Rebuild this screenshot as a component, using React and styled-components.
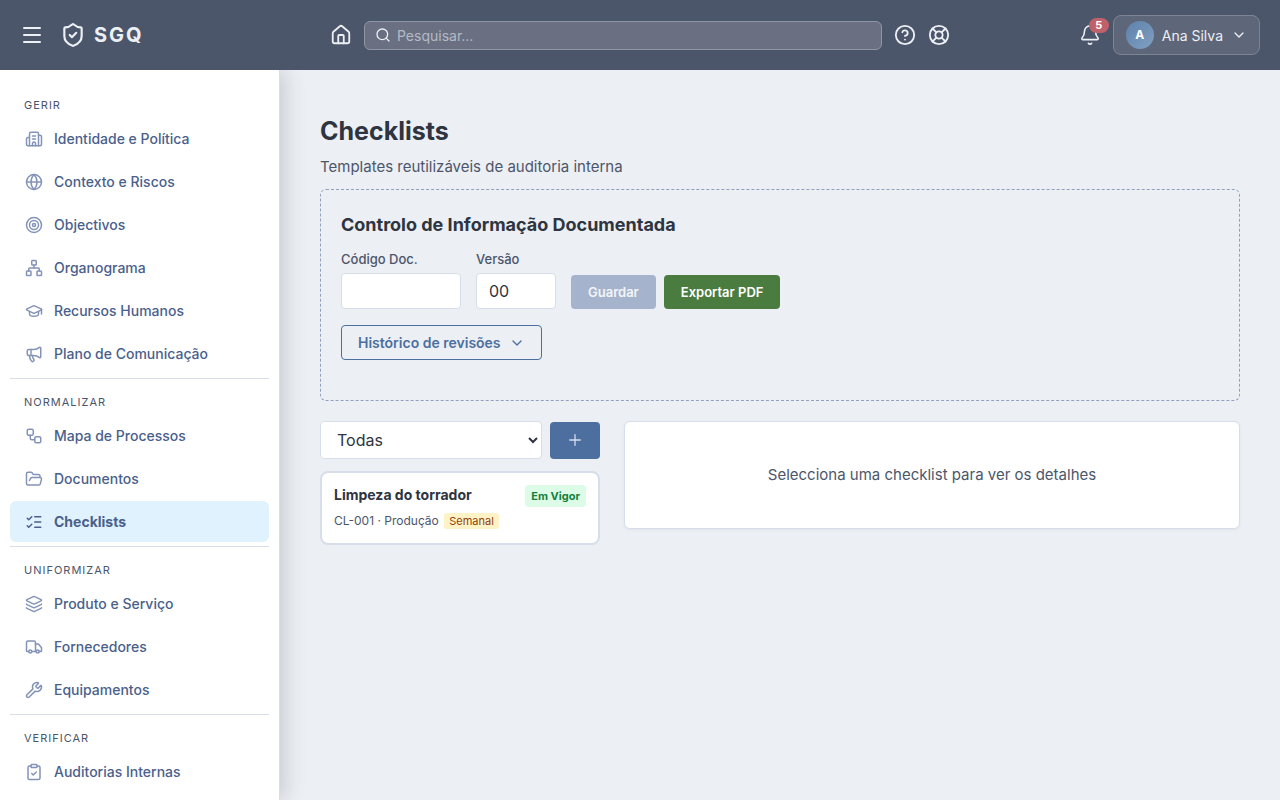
import { useState } from 'react';
import styled, { createGlobalStyle } from 'styled-components';
import {
  Bell,
  Building2,
  ChevronDown,
  CircleQuestionMark,
  ClipboardCheck,
  FolderOpen,
  Globe,
  GraduationCap,
  House,
  Layers,
  LifeBuoy,
  ListChecks,
  Megaphone,
  Menu,
  Network,
  Plus,
  Search,
  ShieldCheck,
  Target,
  Truck,
  Workflow,
  Wrench,
} from 'lucide-react';

const sections = [
  {
    title: 'Gerir',
    items: [
      { label: 'Identidade e Política', icon: Building2 },
      { label: 'Contexto e Riscos', icon: Globe },
      { label: 'Objectivos', icon: Target },
      { label: 'Organograma', icon: Network },
      { label: 'Recursos Humanos', icon: GraduationCap },
      { label: 'Plano de Comunicação', icon: Megaphone },
    ],
  },
  {
    title: 'Normalizar',
    items: [
      { label: 'Mapa de Processos', icon: Workflow },
      { label: 'Documentos', icon: FolderOpen },
      { label: 'Checklists', icon: ListChecks },
    ],
  },
  {
    title: 'Uniformizar',
    items: [
      { label: 'Produto e Serviço', icon: Layers },
      { label: 'Fornecedores', icon: Truck },
      { label: 'Equipamentos', icon: Wrench },
    ],
  },
  {
    title: 'Verificar',
    items: [{ label: 'Auditorias Internas', icon: ClipboardCheck }],
  },
];

const App = () => {
  const [active, setActive] = useState('Checklists');
  const [code, setCode] = useState('');
  const [version, setVersion] = useState('00');

  return (
    <>
      <GlobalStyle />
      <Header>
        <Brand>
          <IconButton type="button" aria-label="Menu">
            <Menu size={24} />
          </IconButton>
          <Logo href="#">
            <ShieldCheck size={26} />
            SGQ
          </Logo>
        </Brand>

        <HeaderCenter>
          <IconLink href="#" aria-label="Início">
            <House size={22} />
          </IconLink>
          <SearchBox>
            <Search size={16} />
            <input type="search" placeholder="Pesquisar..." aria-label="Pesquisar" />
          </SearchBox>
          <IconLink href="#" aria-label="Ajuda">
            <CircleQuestionMark size={22} />
          </IconLink>
          <IconLink href="#" aria-label="Suporte">
            <LifeBuoy size={22} />
          </IconLink>
        </HeaderCenter>

        <HeaderRight>
          <BellButton type="button" aria-label="Notificações">
            <Bell size={22} strokeWidth={1.75} />
            <Badge>5</Badge>
          </BellButton>
          <UserButton type="button">
            <Avatar>A</Avatar>
            Ana Silva
            <ChevronDown size={16} />
          </UserButton>
        </HeaderRight>
      </Header>

      <Body>
        <Sidebar>
          {sections.map((section) => (
            <Section key={section.title}>
              <SectionTitle>{section.title}</SectionTitle>
              {section.items.map(({ label, icon: Icon }) => (
                <NavItem
                  key={label}
                  href="#"
                  $active={label === active}
                  onClick={() => setActive(label)}
                >
                  <NavIcon>
                    <Icon size={18} />
                  </NavIcon>
                  {label}
                </NavItem>
              ))}
            </Section>
          ))}
        </Sidebar>

        <Main>
          <h1>Checklists</h1>
          <Subtitle>Templates reutilizáveis de auditoria interna</Subtitle>

          <DocControl>
            <h2>Controlo de Informação Documentada</h2>
            <FormRow>
              <Field $width="120px">
                <label htmlFor="doc-code">Código Doc.</label>
                <input
                  id="doc-code"
                  type="text"
                  value={code}
                  onChange={(e) => setCode(e.target.value)}
                />
              </Field>
              <Field $width="80px">
                <label htmlFor="doc-version">Versão</label>
                <input
                  id="doc-version"
                  type="text"
                  value={version}
                  onChange={(e) => setVersion(e.target.value)}
                />
              </Field>
              <Actions>
                <Button type="button" disabled>
                  Guardar
                </Button>
                <Button type="button" $color="#4a7c3f">
                  Exportar PDF
                </Button>
              </Actions>
            </FormRow>
            <OutlineButton type="button">
              Histórico de revisões
              <ChevronDown size={16} />
            </OutlineButton>
          </DocControl>

          <Columns>
            <div>
              <Filter>
                <select aria-label="Filtrar checklists">
                  <option>Todas</option>
                </select>
                <AddButton type="button" aria-label="Nova checklist">
                  <Plus size={18} strokeWidth={1.75} />
                </AddButton>
              </Filter>
              <Card>
                <CardTop>
                  <h3>Limpeza do torrador</h3>
                  <Status>Em Vigor</Status>
                </CardTop>
                <CardMeta>
                  CL-001 · Produção <Frequency>Semanal</Frequency>
                </CardMeta>
              </Card>
            </div>
            <Detail>Selecciona uma checklist para ver os detalhes</Detail>
          </Columns>
        </Main>
      </Body>
    </>
  );
};

const GlobalStyle = createGlobalStyle`
  * {
    box-sizing: border-box;
  }

  body {
    margin: 0;
    overflow: hidden;
    background-color: #eceff4;
    color: #2e3440;
    font-family: Inter, Roboto, sans-serif;
    font-size: 15px;
  }

  h1, h2, h3, p {
    margin: 0;
  }

  button, input, select {
    font-family: inherit;
  }

  a {
    color: inherit;
    text-decoration: none;
  }

  svg {
    flex-shrink: 0;
  }
`;

const Header = styled.header`
  position: relative;
  z-index: 2;
  display: grid;
  grid-template-columns: 1fr minmax(0, 620px) 1fr;
  align-items: center;
  height: 70px;
  padding: 0 20px;
  background-color: #4c566a;
  color: #eceff4;
`;

const Brand = styled.div`
  display: flex;
  align-items: center;
  gap: 16px;
`;

const IconButton = styled.button`
  display: flex;
  padding: 0;
  border: none;
  background: none;
  color: inherit;
  cursor: pointer;
`;

const IconLink = styled.a`
  display: flex;
`;

const Logo = styled.a`
  display: flex;
  align-items: center;
  gap: 8px;
  font-size: 20px;
  font-weight: 700;
  letter-spacing: 2px;
`;

const HeaderCenter = styled.div`
  display: flex;
  align-items: center;
  gap: 12px;
`;

const SearchBox = styled.label`
  display: flex;
  flex: 1;
  align-items: center;
  gap: 6px;
  height: 29px;
  padding: 0 10px;
  border: 1px solid #8e96a6;
  border-radius: 6px;
  background-color: #6a7082;

  input {
    flex: 1;
    min-width: 0;
    padding: 0;
    border: none;
    outline: none;
    background: none;
    color: #eceff4;
    font-size: 14px;
  }

  input::placeholder {
    color: #b4bac6;
  }
`;

const HeaderRight = styled.div`
  display: flex;
  align-items: center;
  justify-content: flex-end;
  gap: 12px;
`;

const BellButton = styled(IconButton)`
  position: relative;
`;

const Badge = styled.span`
  position: absolute;
  top: -6px;
  right: -8px;
  min-width: 20px;
  border-radius: 8px;
  background-color: #bf616a;
  color: #fff;
  font-size: 11px;
  font-weight: 700;
  line-height: 15px;
  text-align: center;
`;

const UserButton = styled.button`
  display: flex;
  align-items: center;
  gap: 8px;
  height: 40px;
  padding: 0 12px;
  border: 1px solid #7d8595;
  border-radius: 8px;
  background-color: #5e6679;
  color: #eceff4;
  font-size: 14px;
  cursor: pointer;
`;

const Avatar = styled.span`
  width: 28px;
  border-radius: 50%;
  background: linear-gradient(135deg, #5e81ac, #81a1c1);
  color: #fff;
  font-size: 12px;
  font-weight: 700;
  line-height: 28px;
  text-align: center;
`;

const Body = styled.div`
  display: flex;
  height: calc(100vh - 70px);
`;

const Sidebar = styled.nav`
  flex: 0 0 280px;
  padding: 12px 10px;
  overflow: hidden;
  border-right: 1px solid #d8dee9;
  background-color: #fff;
  box-shadow: 4px 0 20px rgba(46, 52, 64, 0.2);
`;

const Section = styled.section`
  padding-bottom: 2px;
  border-bottom: 1px solid #d8dee9;

  &:last-child {
    border-bottom: none;
  }
`;

const SectionTitle = styled.div`
  padding: 16px 14px 6px;
  color: #4c566a;
  font-size: 11px;
  letter-spacing: 1px;
  line-height: 14px;
  text-transform: uppercase;
`;

const NavItem = styled.a`
  display: flex;
  align-items: center;
  gap: 10px;
  height: 41px;
  margin-bottom: 2px;
  padding: 0 14px;
  border-radius: 6px;
  background-color: ${({ $active }) => ($active ? '#e0f2fe' : 'transparent')};
  color: #4a5f8c;
  font-size: 14px;
  font-weight: ${({ $active }) => ($active ? 700 : 500)};

  svg {
    color: ${({ $active }) => ($active ? '#4a5f8c' : '#8494b8')};
  }
`;

const NavIcon = styled.span`
  display: flex;
  justify-content: center;
  width: 20px;
`;

const Main = styled.main`
  flex: 1;
  min-width: 0;
  padding: 44px 40px;
  overflow: auto;

  h1 {
    font-size: 25px;
    font-weight: 700;
    line-height: 34px;
  }
`;

const Subtitle = styled.p`
  margin-top: 6px;
  color: #4c566a;
  line-height: 26px;
`;

const DocControl = styled.section`
  margin: 9px 0 20px;
  padding: 20px 20px 40px;
  border: 1px dashed #8fa1bf;
  border-radius: 6px;

  h2 {
    font-size: 18px;
    font-weight: 700;
    line-height: 29px;
  }
`;

const FormRow = styled.div`
  display: flex;
  align-items: flex-end;
  gap: 15px;
  margin: 12px 0 16px;
`;

const Field = styled.div`
  width: ${({ $width }) => $width};

  label {
    display: block;
    margin-bottom: 6px;
    color: #4c566a;
    font-size: 13px;
    font-weight: 500;
    line-height: 16px;
  }

  input {
    display: block;
    width: 100%;
    height: 36px;
    padding: 0 12px;
    border: 1px solid #d8dee9;
    border-radius: 4px;
    background-color: #fff;
    color: #2e3440;
    font-size: 16px;
  }
`;

const Actions = styled.div`
  display: flex;
  gap: 8px;
`;

const Button = styled.button`
  height: 34px;
  padding: 0 17px;
  border: none;
  border-radius: 4px;
  background-color: ${({ $color }) => $color || '#4c6f9f'};
  color: #fff;
  font-size: 13px;
  font-weight: 600;
  cursor: pointer;

  &:disabled {
    background-color: #a5b4cc;
    color: #f3f5f9;
    cursor: not-allowed;
  }
`;

const OutlineButton = styled.button`
  display: flex;
  align-items: center;
  gap: 8px;
  height: 35px;
  padding: 0 16px;
  border: 1px solid #4c6f9f;
  border-radius: 4px;
  background: none;
  color: #4c6f9f;
  font-size: 14px;
  font-weight: 600;
  cursor: pointer;
`;

const Columns = styled.div`
  display: grid;
  grid-template-columns: 280px 1fr;
  align-items: start;
  gap: 24px;
`;

const Filter = styled.div`
  display: flex;
  align-items: center;
  gap: 8px;
  margin-bottom: 12px;

  select {
    flex: 1;
    height: 38px;
    padding: 0 0 0 12px;
    border: 1px solid #d8dee9;
    border-radius: 4px;
    background-color: #fff;
    color: #2e3440;
    font-size: 16px;
  }
`;

const AddButton = styled.button`
  display: flex;
  align-items: center;
  justify-content: center;
  width: 50px;
  height: 37px;
  padding: 0;
  border: none;
  border-radius: 4px;
  background-color: #4c6f9f;
  color: #d8dee9;
  cursor: pointer;
`;

const Card = styled.article`
  padding: 12px;
  border: 2px solid #d8dee9;
  border-radius: 8px;
  background-color: #fff;
`;

const CardTop = styled.div`
  display: flex;
  align-items: flex-start;
  justify-content: space-between;

  h3 {
    font-size: 14px;
    font-weight: 700;
    line-height: 20px;
  }
`;

const Status = styled.span`
  padding: 0 6px;
  border-radius: 4px;
  background-color: #dcfce7;
  color: #15803d;
  font-size: 11px;
  font-weight: 700;
  line-height: 22px;
`;

const CardMeta = styled.p`
  margin-top: 4px;
  color: #4c566a;
  font-size: 12px;
  line-height: 20px;
`;

const Frequency = styled.span`
  margin-left: 2px;
  padding: 1px 5px;
  border-radius: 3px;
  background-color: #fef3c7;
  color: #92400e;
  font-size: 11px;
`;

const Detail = styled.section`
  padding: 40px 20px;
  border: 1px solid #d8dee9;
  border-radius: 6px;
  background-color: #fff;
  box-shadow: 0 1px 3px rgba(46, 52, 64, 0.06);
  color: #4c566a;
  line-height: 26px;
  text-align: center;
`;

export default App;
